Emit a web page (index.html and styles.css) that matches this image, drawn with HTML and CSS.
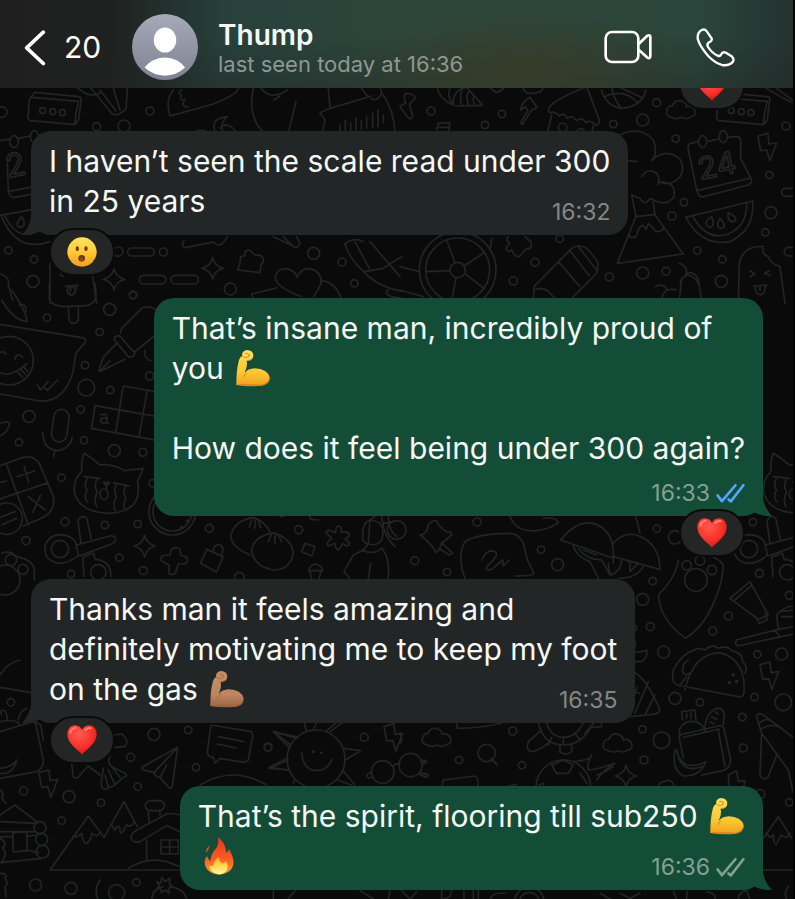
FILE: index.html
```html
<!DOCTYPE html>
<html lang="en">
<head>
<meta charset="utf-8">
<meta name="viewport" content="width=device-width, initial-scale=1">
<title>Chat with Thump</title>
<link rel="stylesheet" href="styles.css">
</head>
<body>
<svg class="defs" aria-hidden="true">
  <defs>
    <linearGradient id="gold" x1="0" y1="0" x2="0" y2="1"><stop offset="0" stop-color="#ffe05c"/><stop offset=".65" stop-color="#fcc531"/><stop offset="1" stop-color="#ef9f1c"/></linearGradient>
    <linearGradient id="tan" x1="0" y1="0" x2="0" y2="1"><stop offset="0" stop-color="#c68e6a"/><stop offset=".65" stop-color="#bd8560"/><stop offset="1" stop-color="#9c6545"/></linearGradient>
    <radialGradient id="red" cx=".4" cy=".3" r=".75"><stop offset="0" stop-color="#ff5a4e"/><stop offset=".6" stop-color="#f8312b"/><stop offset="1" stop-color="#d81410"/></radialGradient>
    <linearGradient id="face" x1="0" y1="0" x2="0" y2="1"><stop offset="0" stop-color="#ffe45c"/><stop offset=".5" stop-color="#ffcb38"/><stop offset="1" stop-color="#f69a1c"/></linearGradient>
    <linearGradient id="flame" x1="0" y1="0" x2="0" y2="1"><stop offset="0" stop-color="#e8331c"/><stop offset=".55" stop-color="#fb5a22"/><stop offset="1" stop-color="#ff9c2a"/></linearGradient>
    <linearGradient id="core" x1="0" y1="0" x2="0" y2="1"><stop offset="0" stop-color="#ff9c2a"/><stop offset=".5" stop-color="#ffd94a"/><stop offset="1" stop-color="#fff6a8"/></linearGradient>
    <linearGradient id="avatar" x1="0" y1="0" x2="0" y2="1"><stop offset="0" stop-color="#a6a9b8"/><stop offset="1" stop-color="#7f8290"/></linearGradient>
    <symbol id="arm" viewBox="728 178 108 116">
      <path d="M731 288 Q731 245 738 216 Q741 203 749 199 Q746 185 763 181 Q784 182 783 199 Q781 214 763 215 Q766 233 756 251 Q767 238 787 237 Q826 238 833 265 Q834 285 810 290 Q770 294 731 288Z"/>
      <path d="M763 251 Q757 255 754 262 M750 200 Q757 207 764 203 Q771 203 771 196 M759 192 Q766 188 771 195 M762 215 Q769 214 775 211" fill="none" stroke="#8a4b12" stroke-opacity=".5" stroke-width="3" stroke-linecap="round"/>
      <path d="M735 288 Q775 287 808 289 Q825 286 831 272" fill="none" stroke="#a85a10" stroke-opacity=".35" stroke-width="5"/>
    </symbol>
    <symbol id="heart" viewBox="0 0 90 90">
      <path fill="url(#red)" d="M45 89 C38 78 1 58 1 28 C1 11 12 1 24 1 C35 1 42 8 45 15 C48 8 55 1 66 1 C78 1 89 11 89 28 C89 58 52 78 45 89Z"/>
      <path d="M10 24 Q12 10 25 8 M55 15 Q62 7 72 10" fill="none" stroke="#ff9a8c" stroke-opacity=".75" stroke-width="6" stroke-linecap="round"/>
    </symbol>
    <symbol id="wow" viewBox="0 0 90 90">
      <circle cx="45" cy="45" r="44" fill="url(#face)"/>
      <ellipse cx="31" cy="35" rx="5" ry="7" fill="#6a3b0c"/><ellipse cx="57" cy="35" rx="5" ry="7" fill="#6a3b0c"/>
      <ellipse cx="44" cy="64" rx="10" ry="10" fill="#6a3b0c"/><ellipse cx="44" cy="67" rx="5" ry="5" fill="#8f4d1a"/>
    </symbol>
    <symbol id="fire" viewBox="610 530 94 116">
      <path fill="url(#flame)" d="M656 645 Q614 640 613 604 Q614 594 621 588 Q624 600 631 604 Q632 580 648 565 Q657 552 654 531 Q676 546 679 578 Q687 574 687 566 Q704 595 701 612 Q697 642 656 645Z"/>
      <path fill="#ee4a20" d="M616 576 Q619 562 628 556 Q626 568 620 576Z"/>
      <path fill="url(#core)" d="M656 644 Q628 640 628 617 Q634 622 639 617 Q643 600 656 590 Q657 606 669 611 Q677 608 677 601 Q688 619 681 631 Q674 644 656 644Z"/>
    </symbol>
    <symbol id="tail" viewBox="0 0 34 28"><path fill="currentColor" d="M0 0 H23 C23 13 27 22 33 28 C26 28 19 27 15 24 C11 27 5 28 0 28Z"/></symbol>
    <path id="spark" d="M0 -32 Q6 -6 32 0 Q6 6 0 32 Q-6 6 -32 0 Q-6 -6 0 -32Z"/>
    <path id="bolt" d="M-28 -38 L2 -46 L5 -14 L28 -17 L8 36 L-2 4 L-20 6Z"/>
    <path id="cloud" d="M-28 22 Q-48 18 -42 0 Q-38 -14 -26 -12 Q-18 -34 4 -26 Q16 -22 16 -10 Q34 -16 42 2 Q48 18 26 22 Q14 30 2 22 Q-14 30 -28 22Z"/>
    <g id="card"><path d="M98 22 L236 34 Q226 70 224 104 L92 92 Q83 90 84 80 L88 30 Q90 21 98 22Z M94 20 L104 7 L236 20 Q245 22 243 32 L236 90 L226 103"/><circle cx="128" cy="62" r="9"/><circle cx="158" cy="65" r="9"/><circle cx="187" cy="68" r="9"/></g>
    <g id="scissors"><path d="M243 760 L234 695 Q238 680 248 680 Q260 680 262 692 L274 748 M230 765 L330 738 Q346 736 347 748 Q347 757 335 762 L240 797 M235 795 Q210 820 175 820 Q135 812 134 775 Q140 735 185 734 Q215 738 226 755 L236 797 M252 860 L248 802 L280 790 L286 808 Q335 812 332 860"/><circle cx="180" cy="777" r="26"/><circle cx="295" cy="847" r="23"/></g>
    <g id="cat"><path d="M252 490 Q244 505 245 545 Q215 575 225 615 Q245 668 330 670 Q400 665 412 622 Q418 590 412 575 L430 535 L375 542 Q335 520 300 525 Q270 500 252 490Z M252 560 L300 565 M340 578 L388 588 M262 562 Q250 590 262 600 Q250 620 262 635 M292 566 Q280 590 292 605 Q280 630 290 650 M350 582 Q338 605 350 620 Q336 640 346 662 M378 587 Q366 610 378 625 Q366 645 374 655 M310 577 L328 578 L319 588Z M319 588 V598"/><ellipse cx="312" cy="613" rx="12" ry="16"/></g>
  </defs>
</svg>

<div class="chat">
  <svg class="wallpaper" viewBox="0 0 795 899" preserveAspectRatio="xMinYMin slice" aria-hidden="true">
    <g transform="translate(0 90) scale(.3333)">
      <use href="#card"/>
      <path d="M230 -10 Q250 12 275 15 Q292 15 300 8 M265 -15 L335 70 Q345 78 358 72 L378 58 L382 -5 M300 0 L348 62 M340 -5 L360 60 M510 78 Q495 30 520 0 M510 78 L640 42 Q710 15 716 -5 M545 0 Q530 10 545 15 Q535 30 555 30 Q540 48 565 52 M760 -5 Q745 60 775 110 L790 125 M780 -10 Q810 35 862 0 M888 35 L866 125 M822 30 L840 18"/>
      <path d="M985 -5 L990 55 L960 68 L975 90 L968 125 M990 55 L1115 18 M1085 -5 Q1110 35 1130 28 Q1150 15 1142 -4 M1146 10 Q1182 60 1185 125 M1020 105 V122 M1036 90 V125 M1052 98 V125 M1068 85 V120 M1084 92 V118 M1100 78 V115 M1118 70 V112 M1134 60 V110 M1150 75 V98 M645 125 Q630 85 682 80 Q660 98 668 122 M660 115 Q680 90 708 125 M585 125 Q605 115 620 125"/>
      <path d="M0 152 L28 148 M56 145 L90 138 M22 220 L25 300 Q28 325 45 322 L100 312 M25 305 L100 290 M0 376 L100 358 M5 380 Q50 490 150 455 M15 378 Q45 442 95 432 M65 380 Q40 410 62 412 Q82 408 65 380Z"/>
      <ellipse cx="42" cy="155" rx="13" ry="18"/><ellipse cx="103" cy="140" rx="12" ry="18"/>
      <text x="24" y="264" font-size="96" transform="rotate(-12 24 264)">2</text>
      <rect x="383" y="474" width="80" height="24" rx="12"/><rect x="418" y="556" width="80" height="26" rx="13"/><rect x="513" y="556" width="82" height="26" rx="13"/>
      <use href="#spark" x="638" y="535"/><use href="#spark" x="342" y="568"/>
      <path d="M722 500 Q722 520 713 540 L780 548 L783 525 Q798 510 783 497 L762 494 Q750 472 735 486 L734 497Z M905 620 Q825 590 826 560 Q835 530 868 538 Q888 548 892 562 Q902 534 932 536 Q968 548 963 580 Q950 610 940 620 M755 612 L830 594 M755 612 L765 640 M968 572 Q1010 580 1025 630 M552 452 Q540 475 560 472 L640 456 Q660 480 682 440 M850 440 L880 470 Q895 475 900 460 L890 440 M820 440 L880 468"/>
      <path d="M1035 462 Q1060 440 1090 455 M1035 462 Q1050 510 1092 545 L1150 535 L1205 500 M1065 455 L1108 535 M1110 455 L1200 560 M1092 545 Q1130 590 1210 605 M1165 600 Q1150 610 1175 620 L1205 625 M150 520 V640 M182 550 Q182 560 190 558 M195 588 L235 586 M202 590 Q200 613 215 614 Q230 612 228 588 M212 590 V604 M278 560 L290 640 M0 552 Q30 560 25 585 L38 630"/>
      <circle cx="355" cy="485" r="14"/><circle cx="490" cy="486" r="12"/><circle cx="450" cy="63" r="12"/><circle cx="290" cy="110" r="12"/><circle cx="372" cy="108" r="18"/><circle cx="5" cy="66" r="16"/><circle cx="25" cy="481" r="11"/><circle cx="102" cy="508" r="11"/><circle cx="99" cy="574" r="18"/><circle cx="941" cy="490" r="18"/><circle cx="1026" cy="516" r="12"/><circle cx="1063" cy="580" r="11"/><circle cx="691" cy="597" r="18"/><circle cx="399" cy="615" r="11"/>
    </g>
    <g transform="translate(400 90) scale(.3333)">
      <use href="#card" x="866"/><use href="#cloud" x="843" y="60"/><use href="#bolt" x="1102" y="176"/>
      <path d="M450 50 Q460 30 560 -10 L598 90 Q597 108 585 105 Q570 88 558 98 Q545 78 530 92 Q515 72 503 85 Q490 65 478 78 Q465 62 450 68 Q440 62 450 50Z M455 75 L442 130 M580 108 L575 130 M604 0 Q620 50 665 55 Q725 50 738 0 M635 -10 Q640 30 665 55 M612 20 Q670 -5 710 35 M655 -10 Q700 10 730 25 M110 -10 Q120 30 160 45 Q140 20 150 -5 M160 45 Q155 5 195 -8 M165 48 L248 46 L198 -10 M185 0 Q178 25 185 46 M205 5 Q196 25 207 46 M222 20 Q215 30 226 46 M272 -5 Q290 18 310 -5 M370 -5 Q375 12 392 10 Q430 8 428 -5"/>
      <path d="M0 48 L18 38 Q5 12 22 10 Q48 14 45 26 L28 42 L38 78 Q35 90 26 85 L0 50 M362 60 Q365 35 390 22 L410 50 Q405 60 396 58 L370 100 Q362 108 364 96 L384 62 L376 50 L362 60 M110 118 L115 100 L150 98 L146 125 M118 112 H148"/>
      <path d="M660 135 Q720 105 760 150 Q775 190 755 212 Q800 170 842 210 Q862 260 812 280 Q795 283 780 276 Q830 275 822 320 Q800 350 765 332 L750 325 Q735 350 720 325 L695 315 L708 378 L652 520 L850 492 L765 375 L760 335 M725 260 Q745 230 772 252 Q782 270 773 285 M685 212 L712 215 M708 380 L762 374 M686 432 Q690 448 708 440 Q715 412 728 405 L738 418 L746 400 L768 425 Q792 425 790 410"/>
      <path d="M893 155 L872 160 Q862 163 865 178 L888 290 Q895 326 912 320 L1045 285 Q1060 278 1052 264 L1022 205 L1022 150 Q1018 136 1000 140 L986 142 M955 147 L924 154 M890 302 L1052 264 M857 382 L1058 333 Q1065 420 990 455 Q905 470 857 382Z M878 378 Q920 455 985 432 Q1042 408 1040 340 M935 380 Q905 400 928 412 Q948 410 935 380Z M960 385 Q945 410 962 416 Q985 412 960 385Z M985 368 Q980 395 1000 396 Q1020 385 985 368Z"/>
      <ellipse cx="908" cy="155" rx="12" ry="18"/><ellipse cx="970" cy="140" rx="12" ry="18"/>
      <text x="902" y="270" font-size="92" transform="rotate(-12 902 270)">24</text>
      <circle cx="173" cy="540" r="115"/><circle cx="173" cy="540" r="96"/><circle cx="173" cy="540" r="23"/>
      <path d="M165 518 L140 450 M192 528 L250 490 M194 550 L252 595 M168 563 L155 635 M150 542 L78 545 M0 530 L58 545 M0 600 L70 620 M275 445 L270 480 M402 590 L515 475 Q535 460 560 475 L590 510 Q600 530 588 552 L510 630 M402 590 L400 630 M402 600 Q430 590 445 605 L470 630 M475 515 L540 590 M510 482 L568 558 M535 470 L590 540"/>
      <path d="M325 440 Q315 450 330 460 Q310 475 325 485 L335 480 Q345 505 360 498 L380 475 Q400 480 392 455 L375 440 M1015 640 L1018 520 Q1030 465 1090 470 Q1085 495 1105 500 Q1110 520 1140 530 L1155 640 M1050 542 L1065 552 L1050 560 M1108 542 L1094 550 L1110 556 M1060 588 L1102 585 M1066 590 Q1066 614 1082 614 Q1096 612 1096 587 M1080 588 V602 M838 520 Q865 530 858 552 Q885 540 895 570 L905 630 M840 580 Q850 550 872 558 Q888 565 895 580 M845 570 L838 630 M765 590 Q790 578 802 600 M785 630 Q790 590 830 600"/>
      <rect x="1145" y="295" width="60" height="24" rx="12"/><rect x="1153" y="472" width="60" height="26" rx="13"/><path d="M1100 -5 Q1140 20 1180 40 M1130 -5 L1178 30"/>
      <circle cx="488" cy="112" r="13"/><circle cx="542" cy="128" r="12"/><circle cx="93" cy="63" r="12"/><circle cx="306" cy="72" r="11"/><circle cx="255" cy="105" r="11"/><circle cx="640" cy="102" r="11"/><circle cx="728" cy="90" r="18"/><circle cx="770" cy="38" r="12"/><circle cx="827" cy="146" r="11"/><circle cx="1158" cy="108" r="12"/><circle cx="1108" cy="255" r="11"/><circle cx="852" cy="337" r="11"/><circle cx="816" cy="378" r="12"/><circle cx="1113" cy="368" r="18"/><circle cx="1096" cy="427" r="11"/><circle cx="892" cy="482" r="11"/><circle cx="967" cy="508" r="11"/><circle cx="964" cy="574" r="18"/><circle cx="798" cy="544" r="12"/><circle cx="728" cy="549" r="18"/><circle cx="628" cy="561" r="12"/><circle cx="405" cy="517" r="12"/><circle cx="479" cy="446" r="11"/><circle cx="340" cy="573" r="12"/>
    </g>
    <g transform="translate(0 290) scale(.3333)">
      <path d="M148 -20 L148 25 Q150 45 190 50 L260 47 Q290 40 288 10 L285 -20 M205 52 L207 88 Q212 102 222 100 Q236 98 235 85 L235 50 M5 30 Q40 90 80 95 Q85 75 35 0 M58 45 Q80 38 78 65 M0 103 L245 143 Q262 148 255 158 L228 190 L218 250 Q190 338 120 333 L0 312 M0 188 Q10 180 18 192 M45 207 Q50 185 68 202 M0 248 Q30 265 80 222 M52 245 L68 262 M62 238 L78 255 M70 230 L84 245 M112 285 L122 300 L145 275 M135 295 L142 301 L172 270"/>
      <path d="M298 245 Q294 240 312 200 L350 160 M298 245 L375 208 M302 240 L330 212 M343 150 Q342 137 358 137 L405 190 Q400 206 385 200Z M362 128 L365 115 L425 55 Q445 42 485 68 M405 185 L485 120 M435 180 Q430 205 452 212 M485 190 Q472 200 485 215 M370 288 L490 309 M285 347 L490 383 M275 415 L490 455 M285 347 L275 415 M370 288 L347 428 M442 300 L417 440 M480 480 V525"/>
      <path d="M128 428 Q130 480 175 482 Q210 475 217 443 M165 482 L160 500 M0 527 L70 502 Q105 495 120 525 L160 620 Q168 660 130 682 L70 708 M20 525 L85 705 M0 627 L145 578 M72 528 L86 577 M52 560 L104 543 M85 620 L135 660 M122 615 L98 668 M0 577 L20 573 M0 682 L45 665 M5 705 L50 685 M0 400 Q30 390 28 405 Q20 430 0 438"/>
      <rect x="158" y="358" width="46" height="98" rx="23" transform="rotate(8 181 407)"/><circle cx="27" cy="212" r="73"/><circle cx="20" cy="686" r="47"/><circle cx="517" cy="665" r="70"/><circle cx="517" cy="665" r="58"/>
      <path d="M303 375 Q318 368 321 380 L320 398 Q305 402 301 392 Q303 382 320 385 M320 398 L326 400"/>
      <use href="#cat"/><use href="#scissors"/><use href="#spark" x="434" y="768"/>
      <path d="M510 795 L515 778 Q530 768 540 778 L542 795 L560 802 Q566 815 555 822 L535 822 L526 850 Q512 858 506 848 L508 825 L488 816 Q478 806 488 797Z M620 778 L670 800 L650 846 L602 820Z M640 785 Q640 762 660 764 Q675 772 664 796 M750 795 Q690 770 693 735 Q705 690 760 683 Q790 690 810 725 M755 780 Q760 740 820 728 Q875 745 880 790 Q870 840 820 840 Q760 830 755 780Z M748 710 L755 690 M765 715 V690 M782 712 L775 692 M805 755 L815 732 M825 760 V735 M845 755 L835 735 M5 790 Q30 780 50 800 Q100 810 103 840 L103 870"/>
      <circle cx="33" cy="810" r="17"/><circle cx="69" cy="838" r="15"/><circle cx="15" cy="870" r="45"/>
      <circle cx="214" cy="3" r="12"/><circle cx="399" cy="15" r="11"/><circle cx="329" cy="58" r="18"/><circle cx="141" cy="83" r="11"/><circle cx="299" cy="126" r="11"/><circle cx="255" cy="226" r="11"/><circle cx="449" cy="258" r="12"/><circle cx="259" cy="293" r="25"/><circle cx="331" cy="300" r="11"/><circle cx="242" cy="358" r="11"/><circle cx="87" cy="379" r="18"/><circle cx="57" cy="457" r="11"/><circle cx="252" cy="451" r="11"/><circle cx="343" cy="482" r="18"/><circle cx="429" cy="487" r="12"/><circle cx="184" cy="563" r="11"/><circle cx="458" cy="580" r="11"/><circle cx="195" cy="695" r="12"/><circle cx="315" cy="705" r="11"/><circle cx="413" cy="702" r="11"/><circle cx="78" cy="752" r="12"/><circle cx="628" cy="715" r="12"/><circle cx="358" cy="803" r="11"/><circle cx="430" cy="842" r="12"/><circle cx="213" cy="852" r="11"/><circle cx="545" cy="713" r="3"/><circle cx="563" cy="693" r="3"/>
    </g>
    <g transform="translate(0 500) scale(.3333)">
      <path d="M1006 98 L1010 80 Q1025 72 1024 95 L1045 98 Q1055 108 1035 116 L1048 130 Q1045 146 1028 130 L1018 148 Q1005 152 1006 130 L985 138 Q975 130 995 115 L978 98 Q980 84 1006 98Z M915 130 L945 140 L935 168 L905 155Z M835 45 Q845 55 855 45 M928 45 L932 58 L955 60 M925 212 Q930 195 945 192 Q965 195 968 212Z M930 216 L935 235 M962 216 L958 235 M1110 60 Q1085 70 1088 110 Q1088 130 1105 132 L1090 150 L1060 165 L1032 215 L1050 235 M1105 132 Q1130 140 1145 120 Q1155 95 1140 70 Q1120 60 1110 60Z M1110 60 L1130 45 M1090 152 Q1120 165 1145 145 Q1170 170 1165 235 M1112 190 L1105 235 M1145 50 Q1150 110 1185 140 M1165 48 Q1165 90 1190 110 M1150 70 L1180 65"/>
      <circle cx="896" cy="89" r="12"/><circle cx="718" cy="232" r="15"/><circle cx="1190" cy="90" r="28"/>
    </g>
    <g transform="translate(400 500) scale(.3333)">
      <use href="#scissors" x="867" y="-630"/><use href="#cat" x="868" y="-630"/>
      <path d="M60 105 Q80 105 85 75 Q95 60 110 62 Q115 80 140 95 Q155 95 155 105 L125 130 Q120 150 108 158 Q95 130 60 105Z M125 128 L158 160 L148 165 L115 145 M195 235 Q170 170 195 125 Q235 100 330 100 Q355 100 370 130 L382 180 L402 220 Q400 228 345 228 M245 180 Q260 145 285 155 Q300 165 265 195 Q250 215 275 208 L308 180 L310 198 L328 180 M330 50 Q345 85 375 90 Q430 100 475 68 Q470 50 430 55"/>
      <path d="M482 120 Q530 60 580 70 Q645 90 640 175Z M520 138 Q530 170 570 185 L595 235 M535 145 Q560 180 605 180 L630 225 M640 175 L640 190 M640 130 Q670 95 710 105 Q780 130 780 208 L640 170 M625 190 Q625 215 635 225 Q665 210 665 178 M690 185 L690 215 L715 190 M655 235 Q710 235 730 200 M550 150 L590 165 M705 45 Q715 70 720 100"/>
      <path d="M835 180 Q830 230 775 285 Q780 360 857 415 Q930 370 965 240 L970 195 Q960 180 940 172 M990 295 L1050 245 L1105 345 L1075 358Z M1002 302 L1056 256 M1065 348 L1078 370 L1102 360 L1095 340 M1010 420 L1135 388 L1210 375 M1012 438 L1180 402 M1010 420 Q1003 430 1012 438 M1125 390 L1140 410 M1135 385 L1130 345 Q1150 320 1180 318 M1145 350 H1180 M1140 335 L1180 330"/>
      <path d="M855 570 Q880 460 960 458 Q1040 480 1032 580 Q1030 592 1015 590 L830 555 Q812 545 820 510 Q845 460 885 450 Q890 440 915 450 Q935 430 955 445 Q985 435 995 452 Q1030 460 1028 485 Q1045 500 1035 520 M865 480 Q845 490 848 515 Q855 530 868 520 M840 555 L860 530"/>
      <use href="#bolt" x="1108" y="532"/><use href="#cloud" x="110" y="713"/><use href="#cloud" x="653" y="730"/><use href="#spark" x="678" y="828"/>
      <path d="M695 410 Q715 430 700 455 Q720 460 740 450 Q745 470 725 485 L690 485 M695 515 Q735 525 780 630 Q778 645 740 645 L690 650 M745 545 L705 640 M765 585 L735 645 M695 570 L718 580 M712 562 L702 590 M838 705 Q835 675 865 665 L885 665 Q910 670 915 695 M848 660 L845 635 L885 630 L888 662 M860 640 V655 M873 638 V655 M915 690 Q915 640 950 625 Q975 625 972 650 L970 675 M930 665 L942 672 M935 650 L950 658 M945 635 L955 642 M838 715 Q835 705 850 702 L955 678 Q970 675 973 690 L992 780 Q990 805 970 812 L905 825 M838 715 L850 775 M850 712 L958 687 M955 690 L975 800 M825 750 Q815 810 850 828 Q900 830 918 785 Q890 800 860 795 Q835 780 830 750Z M835 770 Q850 820 905 800"/>
      <path d="M1070 650 Q1070 635 1090 645 L1190 720 M1070 650 L1085 700 L1165 810 L1180 880 M1085 700 L1080 825 Q1090 845 1105 830 L1130 765 M1078 670 Q1100 650 1115 665 M1080 690 Q1105 670 1135 680 M170 672 L172 685 Q240 685 305 670 M415 668 Q430 735 490 735 Q550 735 580 668 M440 668 Q450 710 490 712 Q530 712 550 668 M455 712 L445 735 M490 712 V730 M525 700 L540 720 M425 690 L385 725 Q375 755 400 755 Q420 750 450 725 M480 735 V755 Q495 770 515 755 V732 M555 700 L570 682 L605 680 L605 668 M0 700 Q10 720 0 730 M278 780 L292 795 M62 785 Q75 775 80 785 M65 820 L85 825 Q85 835 70 828"/>
      <circle cx="490" cy="862" r="82"/><path d="M455 795 L490 780 L520 795 L505 820 L470 820Z M418 855 L430 850 L435 875 M540 820 Q550 830 560 850 M520 785 Q575 780 575 765 Q560 790 565 810 Q590 810 645 790 Q610 810 590 840 M590 825 Q610 820 640 800 M125 868 L130 840 L225 828 Q235 830 235 865 M285 868 L350 853 M770 868 L780 850 Q805 835 815 845 L825 860 M988 868 L985 825 L1010 812 L1015 845 L1035 842 L1030 868"/>
      <circle cx="888" cy="240" r="34"/><circle cx="860" cy="196" r="14"/><circle cx="900" cy="182" r="14"/><circle cx="936" cy="210" r="14"/>
      <circle cx="231" cy="66" r="12"/><circle cx="44" cy="182" r="12"/><circle cx="141" cy="216" r="11"/><circle cx="423" cy="149" r="11"/><circle cx="473" cy="194" r="18"/><circle cx="771" cy="86" r="11"/><circle cx="825" cy="112" r="20"/><circle cx="1059" cy="66" r="11"/><circle cx="758" cy="243" r="11"/><circle cx="728" cy="298" r="18"/><circle cx="1078" cy="220" r="12"/><circle cx="985" cy="348" r="12"/><circle cx="751" cy="380" r="12"/><circle cx="938" cy="393" r="12"/><circle cx="791" cy="456" r="18"/><circle cx="1072" cy="463" r="11"/><circle cx="1145" cy="462" r="18"/><circle cx="1000" cy="525" r="3"/><circle cx="988" cy="548" r="3"/><circle cx="1010" cy="545" r="3"/><circle cx="825" cy="595" r="18"/><circle cx="900" cy="607" r="11"/><circle cx="1064" cy="591" r="11"/><circle cx="1150" cy="607" r="25"/><circle cx="1027" cy="651" r="11"/><circle cx="728" cy="688" r="11"/><circle cx="785" cy="721" r="25"/><circle cx="1030" cy="744" r="12"/><circle cx="732" cy="780" r="12"/><circle cx="338" cy="693" r="12"/><circle cx="177" cy="780" r="11"/><circle cx="366" cy="796" r="11"/><circle cx="702" cy="383" r="8"/><circle cx="1168" cy="286" r="12"/>
    </g>
    <g transform="translate(0 660) scale(.3333)">
      <path d="M0 45 Q20 10 60 0 M0 82 L95 98 M5 165 Q0 150 10 150 Q20 150 22 180 M0 185 Q50 175 60 195 M55 180 Q60 150 80 145 M0 215 L90 188 Q105 182 108 195 L130 300 Q130 325 110 335 L0 355 M102 182 L122 195 L130 240 M0 325 Q40 320 50 300 Q40 345 0 340 M345 225 L365 222 Q390 240 375 260 L345 262 M215 310 L220 350 Q230 360 240 345 L265 318 M265 318 L300 345 M330 290 Q320 305 335 320 L375 340 Q385 350 370 352 L345 375 L318 388 Q300 390 305 360 L310 325 M325 330 L345 375 M335 320 L360 352 M315 345 L325 380"/>
      <path d="M533 262 L425 322 Q425 332 440 332 L462 338 Q470 355 480 352 L505 382 Q515 388 517 378Z M533 262 L462 338 M500 315 L480 352 M633 195 L755 215 Q762 225 755 245 L745 300 Q740 308 720 305 L660 295 L645 310 L640 292 Q622 290 622 275 Z M655 230 L732 245 M652 252 L708 264 M820 215 L895 232 M820 215 L870 265 M808 325 L865 300 M808 325 L870 330 M600 375 Q700 315 800 375"/>
      <use href="#bolt" x="145" y="376"/>
      <path d="M150 630 L265 468 L312 532 L372 425 L412 500 M150 630 H540 M218 528 Q230 535 245 520 Q250 555 262 550 Q275 535 275 520 Q295 535 300 515 M335 495 L345 510 Q355 490 360 505 Q358 525 368 515 L380 495 Q395 505 402 485 M445 455 L447 485 M480 452 V465 M440 540 V600 M420 505 L500 462 Q520 458 540 465 M420 505 Q390 520 393 535 Q400 550 420 545 L500 497 L540 515 M385 625 Q440 590 500 605 L540 620"/>
      <rect x="436" y="422" width="57" height="30" rx="15"/><path d="M483 540 H535 V582 H483Z M509 540 V582 M483 561 H535"/>
      <path d="M0 465 L45 435 L110 485 M0 485 L110 490 M0 515 H105 M0 530 H35 M80 530 L108 525 M80 570 L115 578 M0 608 L125 595 M38 518 L80 515 L82 572 L40 576Z M0 390 Q15 400 5 415 L18 430 M0 640 Q25 640 15 655 Q28 670 15 680 L18 710 M0 535 Q25 550 8 565 Q25 580 5 605"/>
      <circle cx="120" cy="503" r="18"/><circle cx="125" cy="538" r="18"/><circle cx="128" cy="575" r="19"/>
      <path d="M300 660 Q280 690 295 720 M455 715 Q460 685 490 680 M510 680 Q550 685 560 715 M470 665 L482 670 L485 652 L495 665 L510 655 L508 672 L518 680 L505 685 L508 700 L495 690 L485 698 L482 685 L470 688 L478 676Z"/>
      <circle cx="350" cy="698" r="24"/><circle cx="33" cy="127" r="11"/><circle cx="462" cy="223" r="18"/><circle cx="565" cy="210" r="11"/><circle cx="392" cy="292" r="12"/><circle cx="588" cy="322" r="11"/><circle cx="804" cy="261" r="12"/><circle cx="413" cy="380" r="11"/><circle cx="207" cy="410" r="18"/><circle cx="71" cy="393" r="12"/><circle cx="303" cy="428" r="11"/><circle cx="185" cy="482" r="11"/><circle cx="107" cy="675" r="18"/><circle cx="213" cy="685" r="18"/><circle cx="409" cy="667" r="11"/>
    </g>
    <g transform="translate(260 700) scale(.3333)">
      <circle cx="168" cy="177" r="87"/><path d="M125 158 Q130 212 170 212 Q205 210 215 178 M40 95 L110 115 M40 95 L92 135 M28 202 L82 175 M28 202 L84 210 M133 68 L138 92 M170 68 L160 90 M247 68 L210 95 M230 68 L200 92 M250 145 L302 152 L255 180 M250 212 L285 255 M232 240 L275 255 M100 250 L105 235"/>
      <use href="#bolt" x="400" y="117"/>
      <circle cx="368" cy="216" r="34"/><circle cx="452" cy="195" r="35"/><path d="M400 198 Q408 188 420 192 M335 218 Q318 220 322 230 Q328 238 338 228 M482 185 L495 183 Q502 190 490 192 M478 218 L500 222 Q510 230 495 230 L475 222 M692 176 L712 194 M40 570 V597 M85 595 L105 572 M385 597 L390 572 M425 572 L450 597 L470 575 M300 572 L340 597 M545 570 V597 M575 570 L570 590 L550 597 M612 597 V572 M640 572 V597 M655 572 V597 M690 597 Q700 575 735 580"/><circle cx="808" cy="607" r="45"/><circle cx="808" cy="607" r="30"/>
      <circle cx="680" cy="159" r="26"/><circle cx="24" cy="142" r="11"/><circle cx="313" cy="112" r="12"/><circle cx="160" cy="155" r="2"/><circle cx="184" cy="158" r="2"/>
    </g>
    <g transform="translate(600 770) scale(.3333)">
      <path d="M490 205 L535 140 L575 205 M500 190 Q510 210 520 195 Q520 225 530 222 Q540 200 545 195 Q560 210 570 190 M490 300 H580 M565 350 Q550 365 560 387 M415 387 Q420 362 440 362 L450 387 M0 370 L30 387 M60 370 L90 385 L120 370 M220 365 L230 387 M260 387 L262 365 M320 365 Q350 370 345 387"/>
      <circle cx="480" cy="73" r="14"/><circle cx="568" cy="97" r="11"/>
    </g>
  </svg>

  <header class="topbar">
    <button class="back" type="button" aria-label="Back, 20 unread chats">
      <svg viewBox="74 86 66 110" aria-hidden="true"><path d="M132 95 L82 142 L132 189" fill="none" stroke="currentColor" stroke-width="11" stroke-linecap="round" stroke-linejoin="round"/></svg>
      <span>20</span>
    </button>
    <svg class="avatar" viewBox="0 0 200 200" role="img" aria-label="Thump's profile picture"><circle cx="100" cy="100" r="100" fill="url(#avatar)"/><ellipse cx="100" cy="79" rx="34" ry="38" fill="#fff"/><path d="M38 162 Q60 133 100 132 Q140 133 161 162 Q135 186 100 187 Q65 186 38 162Z" fill="#fff"/></svg>
    <div class="who">
      <h1>Thump</h1>
      <p>last seen today at 16:36</p>
    </div>
    <nav class="calls" aria-label="Calls">
      <button type="button" aria-label="Video call"><svg class="video" viewBox="609 86 144 102" aria-hidden="true"><g fill="none" stroke="currentColor" stroke-width="8" stroke-linejoin="round"><rect x="614" y="92" width="98" height="90" rx="19"/><path d="M713 128 L738 104 Q748 98 748 108 V164 Q748 174 738 168 L713 145"/></g></svg></button>
      <button type="button" aria-label="Voice call"><svg class="phone" viewBox="888 78 116 116" aria-hidden="true"><path d="M905 84 Q914 80 920 88 L934 108 Q937 115 930 119 Q919 124 923 133 Q935 153 954 161 Q960 163 963 156 Q967 148 976 151 L995 163 Q1002 170 998 178 Q986 192 965 188 Q946 183 925 162 Q899 133 893 110 Q892 90 905 84Z" fill="none" stroke="currentColor" stroke-width="7" stroke-linejoin="round"/></svg></button>
    </nav>
  </header>

  <main class="thread">
    <div class="reaction earlier"><svg role="img" aria-label="Red heart"><use href="#heart"/></svg></div>

    <article class="bubble in">
      <p>I haven’t seen the scale read under 300<br>in 25 years</p>
      <div class="meta tucked"><time>16:32</time></div>
      <svg class="tail" aria-hidden="true"><use href="#tail"/></svg>
      <div class="reaction"><svg role="img" aria-label="Surprised face"><use href="#wow"/></svg></div>
    </article>

    <article class="bubble out">
      <p>That’s insane man, incredibly proud of<br>you <svg class="emoji" role="img" aria-label="Flexed biceps"><use href="#arm" fill="url(#gold)"/></svg></p>
      <p class="next">How does it feel being under 300 again?</p>
      <div class="meta"><time>16:33</time><svg class="ticks read" viewBox="348 184 88 62" role="img" aria-label="Read"><path d="M353 221 L366 238 L407 190 M386 233 L393 239 L431 190"/></svg></div>
      <svg class="tail" aria-hidden="true"><use href="#tail"/></svg>
      <div class="reaction"><svg role="img" aria-label="Red heart"><use href="#heart"/></svg></div>
    </article>

    <article class="bubble in">
      <p>Thanks man it feels amazing and<br>definitely motivating me to keep my foot<br>on the gas <svg class="emoji" role="img" aria-label="Flexed biceps"><use href="#arm" fill="url(#tan)"/></svg></p>
      <div class="meta tucked"><time>16:35</time></div>
      <svg class="tail" aria-hidden="true"><use href="#tail"/></svg>
      <div class="reaction"><svg role="img" aria-label="Red heart"><use href="#heart"/></svg></div>
    </article>

    <article class="bubble out">
      <p>That’s the spirit, flooring till sub250 <svg class="emoji" role="img" aria-label="Flexed biceps"><use href="#arm" fill="url(#gold)"/></svg><br><svg class="emoji" role="img" aria-label="Fire"><use href="#fire"/></svg></p>
      <div class="meta tucked"><time>16:36</time><svg class="ticks" viewBox="348 184 88 62" role="img" aria-label="Delivered"><path d="M353 221 L366 238 L407 190 M386 233 L393 239 L431 190"/></svg></div>
      <svg class="tail" aria-hidden="true"><use href="#tail"/></svg>
    </article>
  </main>
</div>
</body>
</html>
```
FILE: styles.css
```css
* { box-sizing: border-box; }

body {
  margin: 0;
  background: #000;
  color: #f6f7f7;
  font-family: Inter, "Liberation Sans", sans-serif;
}

h1, p { margin: 0; }

.defs { position: absolute; width: 0; height: 0; }

.chat {
  position: relative;
  min-height: 100vh;
  overflow: hidden;
  background: #0a0a0a;
  border-right: 2px solid #000;
}

.wallpaper {
  position: absolute;
  inset: 0;
  width: 100%;
  height: 100%;
  fill: none;
  stroke: #232424;
  stroke-width: 5;
  stroke-linecap: round;
  stroke-linejoin: round;
  font-weight: 400;
}

/* Header */

.topbar {
  position: relative;
  z-index: 2;
  display: flex;
  align-items: center;
  height: 88px;
  padding: 6px 58px 0 24px;
  background:
    radial-gradient(ellipse 180px 70px at 66% 85%, #373c28 0%, #373c2800 100%),
    linear-gradient(180deg, #0000 40%, #20202055 100%),
    linear-gradient(90deg, #1f1f1f 0%, #1f2120 14%, #27403a 28%, #2d463b 50%, #2a453b 88%, #24322f 100%);
}

button {
  display: flex;
  align-items: center;
  padding: 0;
  border: 0;
  background: none;
  color: #fff;
  font: inherit;
  cursor: pointer;
}

.back { gap: 18px; width: 108px; font-size: 30px; }
.back svg { width: 22px; height: 37px; }

.avatar { width: 66px; height: 66px; margin-right: 20px; }

.who { flex: 1; padding-top: 4px; }
.who h1 { font-size: 28px; line-height: 30px; font-weight: 600; }
.who p { font-size: 22px; line-height: 28px; color: #8d9893; }

.calls { display: flex; align-items: center; gap: 44px; }
.video { width: 48px; height: 34px; }
.phone { width: 39px; height: 39px; }

/* Messages */

.thread {
  position: relative;
  display: flex;
  flex-direction: column;
  gap: 63px;
  padding: 43px 30px 9px;
}

.bubble {
  position: relative;
  isolation: isolate;
  border-radius: 20px;
  font-size: 30px;
  line-height: 40px;
}

.in {
  align-self: flex-start;
  margin-left: 1px;
  padding: 10px 18px 11px;
  background: #232626;
  color: #f6f7f7;
}

.out {
  align-self: flex-end;
  padding: 10px 18px 11px;
  background: #144d37;
}

.next { margin-top: 40px; }

.meta {
  display: flex;
  justify-content: flex-end;
  align-items: center;
  gap: 6px;
  margin-top: 13px;
  font-size: 23px;
  line-height: 24px;
  color: #858787;
}

.tucked { margin-top: -21px; }
.out .meta { color: #83a094; }

.ticks {
  width: 29px;
  height: 21px;
  fill: none;
  stroke: currentColor;
  stroke-width: 8;
  stroke-linecap: round;
  stroke-linejoin: round;
}

.read { color: #53a6fd; }

.emoji { width: 36px; height: 38px; margin-left: 3px; vertical-align: -8px; }

.tail {
  position: absolute;
  z-index: -1;
  right: -10px;
  bottom: 0;
  width: 34px;
  height: 28px;
  color: #144d37;
}

.in .tail {
  right: auto;
  left: -10px;
  color: #232626;
  transform: scaleX(-1);
}

.reaction {
  position: absolute;
  bottom: -41px;
  display: flex;
  align-items: center;
  justify-content: center;
  width: 66px;
  height: 48px;
  border: 2px solid #0a0a0a;
  border-radius: 24px;
  background: #242626;
}

.reaction svg { width: 30px; height: 30px; }
.in .reaction { left: 18px; }
.out .reaction { right: 18px; }
.earlier { top: -26px; right: 48px; bottom: auto; }
```
